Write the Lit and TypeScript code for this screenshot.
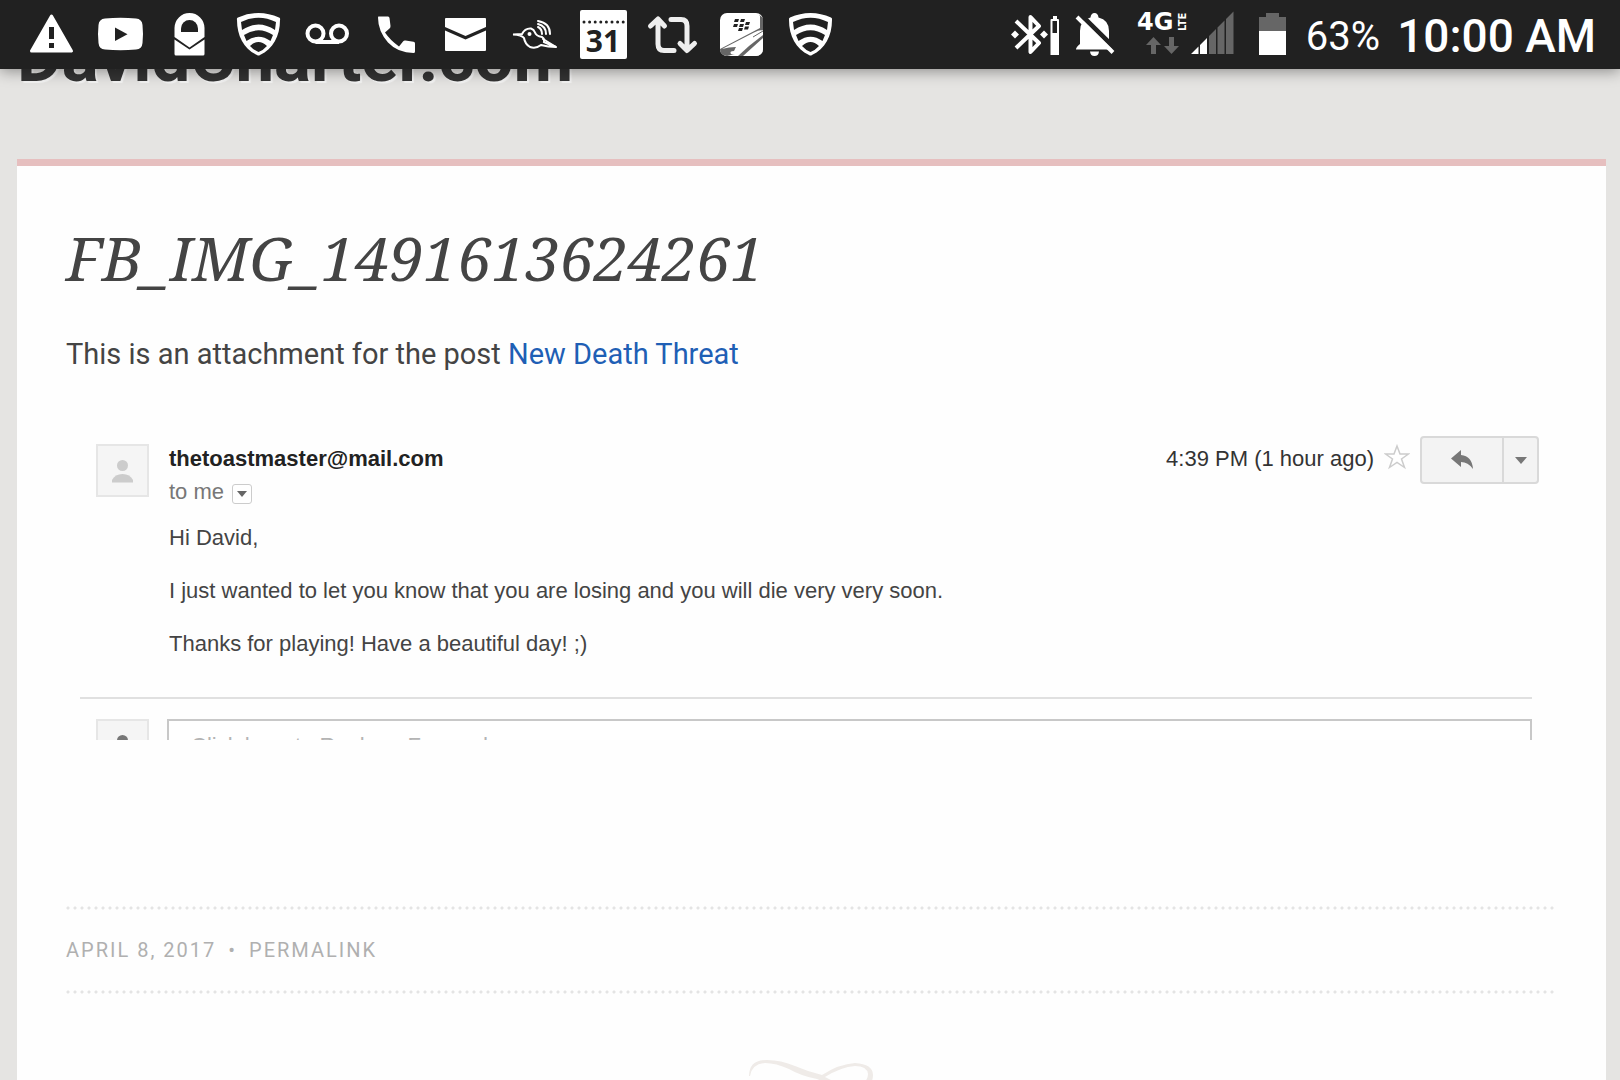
import { LitElement, html, svg, css } from "lit";
import { customElement } from "lit/decorators.js";

const shield = svg`
  <path fill="#fff" d="M34.5 13Q45 13 55 17.500Q56.500 18 56 20C56 36 49 49 36 55Q34.500 56 33 55C20 49 13 36 13 20Q12.500 18 14 17.500Q24 13 34.500 13Z"/>
  <path fill="#212121" d="M17 22Q34.500 13.500 52 22L51 30Q34.500 19 18 30ZM20 35Q34.500 25.500 49 35L46.500 41Q34.500 32.500 22.500 41ZM26 46Q34.500 38 43 46Q39.500 50 34.500 52Q29.500 50 26 46Z"/>`;

const notices = [
  { name: "Alert", art: svg`
    <path d="M34.5 16L54.500 51H14.500Z" fill="#fff" stroke="#fff" stroke-width="3" stroke-linejoin="round"/>
    <path d="M32 27H37V39H32ZM32 43H37V48H32Z" fill="#212121"/>` },
  { name: "Video", art: svg`
    <path d="M19 18.500Q34.500 17 50 18.500Q56 19 56.500 25Q57.500 34 56.500 43Q56 49 50 49.500Q34.500 51 19 49.500Q13 49 12.500 43Q11.500 34 12.500 25Q13 19 19 18.500Z" fill="#fff"/>
    <path d="M29 27.500L41.500 34.300L29 41Z" fill="#212121"/>` },
  { name: "Private mail", art: svg`
    <path d="M19.500 37V28A15 15 0 0 1 49.500 28V37L34.500 47.500Z" fill="#fff"/>
    <path d="M26 32V28.500A8.500 8.500 0 0 1 43 28.500V32Z" fill="#212121"/>
    <path d="M19.500 39.500L34.500 49.500L49.500 39.500V54Q49.500 55.500 48 55.500H21Q19.500 55.500 19.500 54Z" fill="#fff"/>` },
  { name: "Security", art: shield },
  { name: "Voicemail", art: svg`
    <g fill="none" stroke="#fff" stroke-width="4"><circle cx="22.500" cy="33.500" r="8"/><circle cx="46" cy="33.500" r="8"/><path d="M22.500 42H46"/></g>` },
  { name: "Missed call", art: svg`
    <path d="M16.300 16.500H26Q27.300 16.500 27.500 18L28.500 26Q28.600 27.500 27.500 28.500L23 32.500Q28 40 37 46.500L41 41.500Q42 40.300 43.500 40.600L51.500 41.800Q53 42 53 43.500V51.500Q53 53 51.500 53Q36 53 26 42.500Q16 31 16 17.500Z" fill="#fff"/>` },
  { name: "Mail", art: svg`
    <path d="M15 18H54Q55 18 55 19V27L34.500 36L14 27V19Q14 18 15 18ZM14 30.500L34.500 39.500L55 30.500V50Q55 51 54 51H15Q14 51 14 50Z" fill="#fff"/>` },
  { name: "Hummingbird", art: svg`
    <g fill="none" stroke="#fff" stroke-width="2" stroke-linecap="round">
      <path d="M13 34.500L22 34Q25 28 31 28.500Q34 29.500 35 32.500Q36 36 42 37Q45 39 44 42Q48 44 56 47Q48 47 41 45Q36 49 30 47Q25 44 24 38Q22 35 13 34.500Z"/>
      <path d="M43 39L56 47"/>
      <path d="M38 27Q42 29 42 34M38 24Q46 26 46 34M38 21Q50 23 50 34"/>
    </g><circle cx="29.500" cy="34" r="2" fill="#fff"/>` },
  { name: "Calendar", art: svg`
    <rect x="11" y="10" width="47" height="49" rx="2" fill="#fff"/>
    <path d="M15 22H56" stroke="#212121" stroke-width="3" stroke-linecap="round" stroke-dasharray="0 5.600"/>
    <text x="34" y="52" text-anchor="middle" class="day">31</text>` },
  { name: "Repost", art: svg`
    <g fill="none" stroke="#eee" stroke-width="5" stroke-linecap="round" stroke-linejoin="round">
      <path d="M36 50.500H26Q20 50.500 20 44V21M12.500 26L20 19L26.500 26"/>
      <path d="M33 19.500H43Q49 19.500 49 26V49M42 43.500L49 50.500L56.500 43.500"/>
    </g>` },
  { name: "Messenger", art: svg`
    <rect x="13" y="13" width="43" height="43" rx="7" fill="#fff"/>
    <path d="M52 14.500L56 18V30L49 34L36 43Q27 45 28 54L20 56Q13 55 13 49L53 28V16Z" fill="#666"/>
    <path d="M15 49L47 32.500Q54 29 56 31V37L39 51Q32 56 24 54Q22 51 27 51L29 47Q22 47 15 49Z" fill="#fff"/>
    <path d="M56 36L34 56H48Q56 56 56 48Z" fill="#fff"/>
    <path d="M56 31L46 37" stroke="#666" stroke-width="1" fill="none"/>
    <path d="M56 35L42 46L31 56H36L56 38Z" fill="#666"/>
    <g fill="#212121"><path d="M28 19h4l-1 3h-4zM34 19h4l-1 3h-4zM27 24h4l-1 3h-4zM33 24h4l-1 3h-4zM39 22h4l-1 3h-4zM38 26.500h4l-1 3h-4zM32 28h4l-1 3h-4z"/></g>` },
  { name: "Security", art: shield },
];

@customElement("status-bar")
class StatusBar extends LitElement {
  static styles = css`
    :host { display: flex; justify-content: space-between; height: 69px; padding: 0 24px 0 17px; background: #212121; color: #fff; font-family: Roboto, sans-serif; box-shadow: 0 2px 14px rgba(0, 0, 0, 0.4); }
    .group { display: flex; align-items: center; }
    svg { display: block; flex: none; height: 69px; }
    .day { font: 700 30px "Open Sans", sans-serif; fill: #212121; }
    .gen { font: 700 24px "DejaVu Sans", sans-serif; fill: #fff; }
    .lte { font: 700 10px "DejaVu Sans", sans-serif; fill: #fff; }
    .level { font-size: 40px; line-height: 48px; margin: 4px 17px 0 9px; }
    .clock { font-size: 46px; font-weight: 500; line-height: 54px; margin-top: 2px; }
  `;
  render() {
    return html`
      <div class="group">
        ${notices.map((n) => html`<svg width="69" viewBox="0 0 69 69" role="img" aria-label=${n.name}>${n.art}</svg>`)}
      </div>
      <div class="group">
        <svg width="60" viewBox="0 0 60 69" role="img" aria-label="Bluetooth">
          <path d="M9 21L32 43L23.500 52V17L32 26L9 48" fill="none" stroke="#fff" stroke-width="4" stroke-linejoin="round"/>
          <path d="M8 30.500L12 34.500L8 38.500L4 34.500ZM37 30.500L41 34.500L37 38.500L33 34.500Z" fill="#fff"/>
          <path d="M46 16H50V19H51Q52 19 52 20V55H43.500V20Q43.500 19 44.500 19H46Z" fill="#fff"/>
          <path d="M45.500 21H50V33H45.500Z" fill="#212121"/>
        </svg>
        <svg width="60" viewBox="0 0 60 69" role="img" aria-label="Muted">
          <path d="M9 49.500Q9 47 13 44V31Q13 20 23.500 17.500Q24 13 27.500 13Q31 13 31.500 17.500Q42 20 42 31V44Q46 47 46 49.500Z" fill="#fff"/>
          <path d="M23 51.500H32Q31.500 56 27.500 56Q23.500 56 23 51.500Z" fill="#fff"/>
          <path d="M13 14L50 50.500" stroke="#212121" stroke-width="5"/>
          <path d="M10 17L46 52.500" stroke="#fff" stroke-width="4"/>
        </svg>
        <svg width="120" viewBox="0 0 120 69" role="img" aria-label="4G LTE signal">
          <text x="10" y="30" class="gen">4G</text>
          <text transform="translate(59 31) rotate(-90)" class="lte">LTE</text>
          <path d="M26.500 37L34 45H29V54H24V45H19ZM42 37H47V46H52L44.500 54L37 46H42Z" fill="#666"/>
          <path d="M64 54L71.500 46.500V54ZM73 54V45L80 38V54Z" fill="#fff"/>
          <path d="M82 54V36L89 29V54ZM90.500 54V27.500L97.500 20.500V54ZM99 54V19L106.500 11.500V54Z" fill="#666"/>
        </svg>
        <svg width="50" viewBox="0 0 50 69" role="img" aria-label="Battery">
          <path d="M12 17H19V13H32V17H39V31H12Z" fill="#666"/>
          <path d="M12 31H39V55H12Z" fill="#fff"/>
        </svg>
        <span class="level">63%</span>
        <span class="clock">10:00 AM</span>
      </div>`;
  }
}

@customElement("mail-message")
class MailMessage extends LitElement {
  static styles = css`
    :host { display: block; font-family: "Liberation Sans", Arial, sans-serif; font-size: 22px; line-height: 27px; color: #444; }
    button, input { font: inherit; color: inherit; margin: 0; padding: 0; box-sizing: border-box; }
    p { margin: 0; }
    .row { display: flex; align-items: flex-start; padding: 0 16px 0 30px; }
    .avatar { flex: none; box-sizing: border-box; width: 53px; height: 53px; border: 2px solid #e6e6e6; background: #f5f5f5; }
    .avatar svg { display: block; }
    .row .avatar { margin-top: 8px; }
    .main { flex: 1; padding: 9px 0 0 20px; }
    .from { font-weight: 700; color: #222; }
    .to { display: flex; align-items: center; gap: 8px; margin-top: 6px; color: #777; }
    .details { display: flex; align-items: center; justify-content: center; width: 20px; height: 20px; margin-top: 4px; border: 1px solid #ccc; border-radius: 3px; background: #fff; }
    .body { display: grid; gap: 26px; margin-top: 19px; }
    .tools { display: flex; align-items: flex-start; }
    .time { padding-top: 9px; color: #333; }
    .star { width: 26px; height: 26px; margin: 8px 10px 0; border: 0; background: none; }
    .split { display: flex; height: 48px; box-sizing: border-box; border: 2px solid #d9d9d9; border-radius: 4px; background: #f3f3f3; }
    .split button { display: flex; align-items: center; justify-content: center; border: 0; background: none; }
    .split .reply { width: 80px; }
    .split .more { width: 35px; border-left: 2px solid #d9d9d9; }
    .rule { height: 0; margin: 40px 23px 20px 14px; border: 0; border-top: 2px solid #e0e0e0; }
    .answer { display: flex; height: 21px; overflow: hidden; padding: 0 23px 0 30px; gap: 18px; }
    .answer input { flex: 1; min-width: 0; height: 54px; padding: 0 22px; border: 2px solid #c8c8c8; background: #fff; }
    .answer input::placeholder { color: #b4b4b4; opacity: 1; }
  `;
  person(color: string) {
    return html`<svg width="49" height="49" viewBox="0 0 49 49" aria-hidden="true"><circle cx="24.500" cy="19.500" r="5.500" fill=${color}/><path d="M14 36.500V34Q17 28 24.500 28Q32 28 35 34V36.500Z" fill=${color}/></svg>`;
  }
  render() {
    return html`
      <div class="row">
        <div class="avatar">${this.person("#ccc")}</div>
        <div class="main">
          <div class="from">thetoastmaster@mail.com</div>
          <div class="to">to me
            <button class="details" aria-label="Show details"><svg width="10" height="6" viewBox="0 0 10 6"><path d="M0 0H10L5 6Z" fill="#666"/></svg></button>
          </div>
          <div class="body">
            <p>Hi David,</p>
            <p>I just wanted to let you know that you are losing and you will die very very soon.</p>
            <p>Thanks for playing! Have a beautiful day! ;)</p>
          </div>
        </div>
        <div class="tools">
          <span class="time">4:39 PM (1 hour ago)</span>
          <button class="star" aria-label="Star"><svg width="26" height="26" viewBox="0 0 26 26"><path d="M13 2L16 10H24.500L17.500 15L20.500 23.500L13 18.500L5.500 23.500L8.500 15L1.500 10H10Z" fill="#fff" stroke="#ccc" stroke-width="1.500"/></svg></button>
          <div class="split">
            <button class="reply" aria-label="Reply"><svg width="22" height="20" viewBox="0 0 22 20"><path d="M0 8.500L10 0V5Q21 6 22 19Q17 12 10 12V17Z" fill="#777"/></svg></button>
            <button class="more" aria-label="More"><svg width="12" height="7" viewBox="0 0 12 7"><path d="M0 0H12L6 7Z" fill="#777"/></svg></button>
          </div>
        </div>
      </div>
      <hr class="rule" />
      <div class="answer">
        <div class="avatar">${this.person("#777")}</div>
        <input type="text" aria-label="Reply text" placeholder="Click here to Reply or Forward" />
      </div>`;
  }
}

@customElement("app-root")
class AppRoot extends LitElement {
  static styles = css`
    :host { display: block; position: relative; height: 100vh; overflow: hidden; background: #e5e4e2; font-family: Roboto, sans-serif; color: #444; }
    .bar { position: absolute; top: 0; left: 0; right: 0; z-index: 1; }
    .page { display: flex; flex-direction: column; min-height: 100vh; }
    .site { padding: 18px 17px 61px; }
    .name { margin: 0; font-size: 69px; font-weight: 700; line-height: 80px; color: #333; text-shadow: 2px 2px 1px #f4f4f4; }
    .card { flex: 1; margin: 0 14px 0 17px; padding: 53px 51px 0 49px; border-top: 7px solid #e6bfbf; background: #fefefe; }
    .title { margin: 0; font: italic 400 61px/78px "Noto Serif", "Liberation Serif", serif; color: #444; }
    .intro { margin: 37px 0 62px; font-size: 29px; line-height: 40px; }
    .intro a { color: #1f5fb5; text-decoration: none; }
    .meta { display: flex; align-items: center; gap: 12px; box-sizing: border-box; height: 88px; margin-top: 166px; padding-bottom: 1px; font-size: 20px; line-height: 28px; letter-spacing: 2px; color: #b0b0b0;
      background-image: radial-gradient(circle at 2px 2px, #e4e4e4 1px, transparent 2px), radial-gradient(circle at 2px 2px, #e4e4e4 1px, transparent 2px);
      background-position: top left, bottom left;
      background-size: 7px 4px;
      background-repeat: repeat-x; }
    .meta a { color: inherit; text-decoration: none; text-transform: uppercase; }
    .swirl { display: block; margin: 66px auto 0; }
  `;
  render() {
    return html`
      <status-bar class="bar"></status-bar>
      <div class="page">
        <header class="site"><h1 class="name">DavidCharter.com</h1></header>
        <main class="card">
          <h2 class="title">FB_IMG_1491613624261</h2>
          <p class="intro">This is an attachment for the post <a href="#post">New Death Threat</a></p>
          <mail-message></mail-message>
          <footer class="meta"><a href="#date">April 8, 2017</a><span>•</span><a href="#permalink">Permalink</a></footer>
          <svg class="swirl" width="124" height="40" viewBox="0 0 124 40" aria-hidden="true">
            <path d="M0 16Q0 0 18 0Q32 0 46 6Q60 12 73 15Q90 4 106 3Q124 4 124 15Q124 27 110 28Q88 28 68 19Q52 16 40 9Q27 3 16 3Q3 4 1 16ZM76 17Q92 26 108 25Q119 23 119 14Q118 6 106 6Q92 7 76 17Z" fill="#efebe8" fill-rule="evenodd"/>
          </svg>
        </main>
      </div>`;
  }
}
